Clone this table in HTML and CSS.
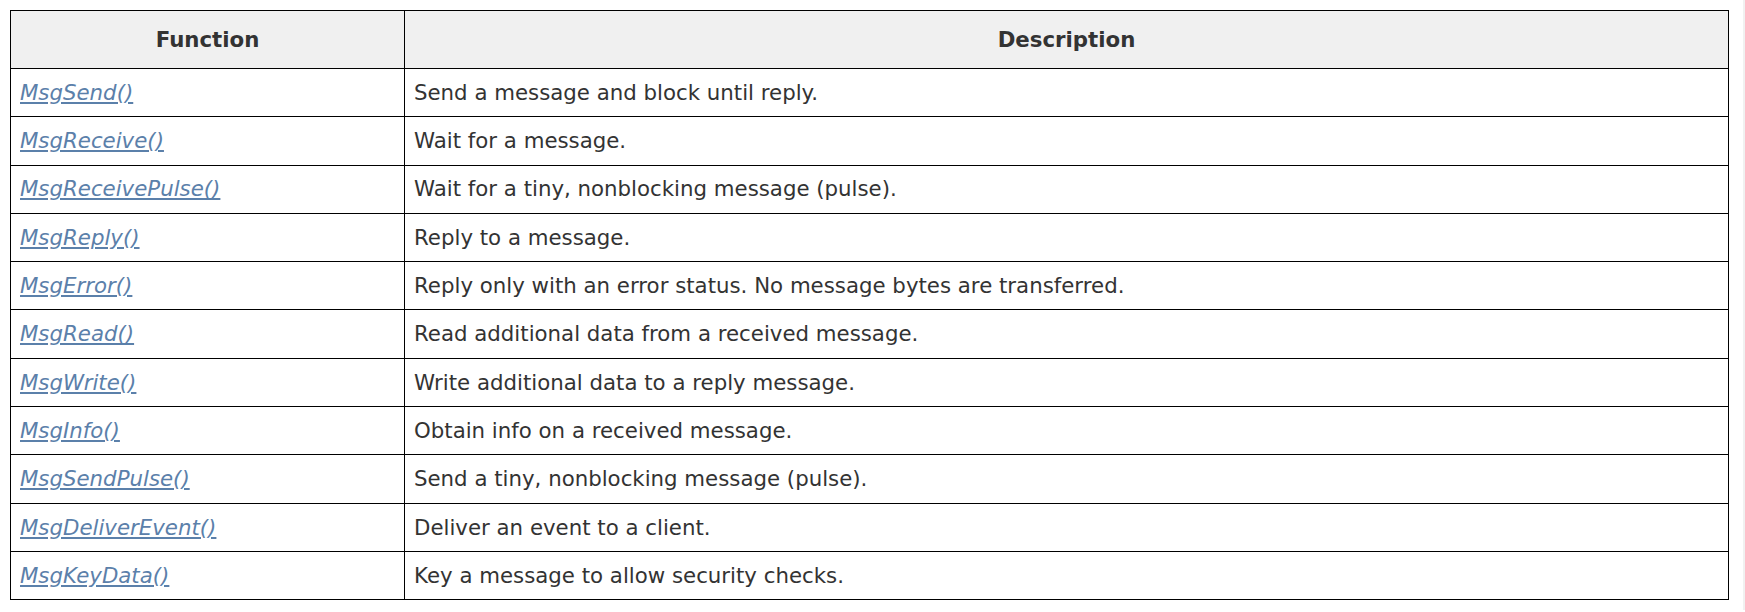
FILE: index.html
```html
<!DOCTYPE html>
<html lang="en">
<head>
<meta charset="utf-8">
<title>Message functions</title>
<link rel="stylesheet" href="styles.css">
</head>
<body>
<table class="ftable">
  <thead>
    <tr><th class="col-fn">Function</th><th>Description</th></tr>
  </thead>
  <tbody>
    <tr><td><a href="#">MsgSend()</a></td><td>Send a message and block until reply.</td></tr>
    <tr><td><a href="#">MsgReceive()</a></td><td>Wait for a message.</td></tr>
    <tr><td><a href="#">MsgReceivePulse()</a></td><td>Wait for a tiny, nonblocking message (pulse).</td></tr>
    <tr><td><a href="#">MsgReply()</a></td><td>Reply to a message.</td></tr>
    <tr><td><a href="#">MsgError()</a></td><td>Reply only with an error status. No message bytes are transferred.</td></tr>
    <tr><td><a href="#">MsgRead()</a></td><td>Read additional data from a received message.</td></tr>
    <tr><td><a href="#">MsgWrite()</a></td><td>Write additional data to a reply message.</td></tr>
    <tr><td><a href="#">MsgInfo()</a></td><td>Obtain info on a received message.</td></tr>
    <tr><td><a href="#">MsgSendPulse()</a></td><td>Send a tiny, nonblocking message (pulse).</td></tr>
    <tr><td><a href="#">MsgDeliverEvent()</a></td><td>Deliver an event to a client.</td></tr>
    <tr><td><a href="#">MsgKeyData()</a></td><td>Key a message to allow security checks.</td></tr>
  </tbody>
</table>
</body>
</html>
```
FILE: styles.css
```css
html {
  background: #fff;
  border-right: 2px solid #f1f1f1;
}
body {
  margin: 10px 14px 10px 10px;
  font-family: "DejaVu Sans", Verdana, sans-serif;
  font-size: 21.3px;
  color: #333;
}
.ftable {
  width: 100%;
  border-collapse: collapse;
  border: 1px solid #000;
}
.ftable th, .ftable td {
  border: 1px solid #000;
  padding: 0 9px;
  text-align: left;
  vertical-align: middle;
  line-height: 1.2;
}
.ftable th {
  background: #f0f0f0;
  font-weight: bold;
  text-align: center;
  height: 57px;
}
.ftable td { height: 47.3px; }
.col-fn { width: 375px; }
.ftable a {
  color: #5b80aa;
  font-style: italic;
  text-decoration: underline;
}
```
